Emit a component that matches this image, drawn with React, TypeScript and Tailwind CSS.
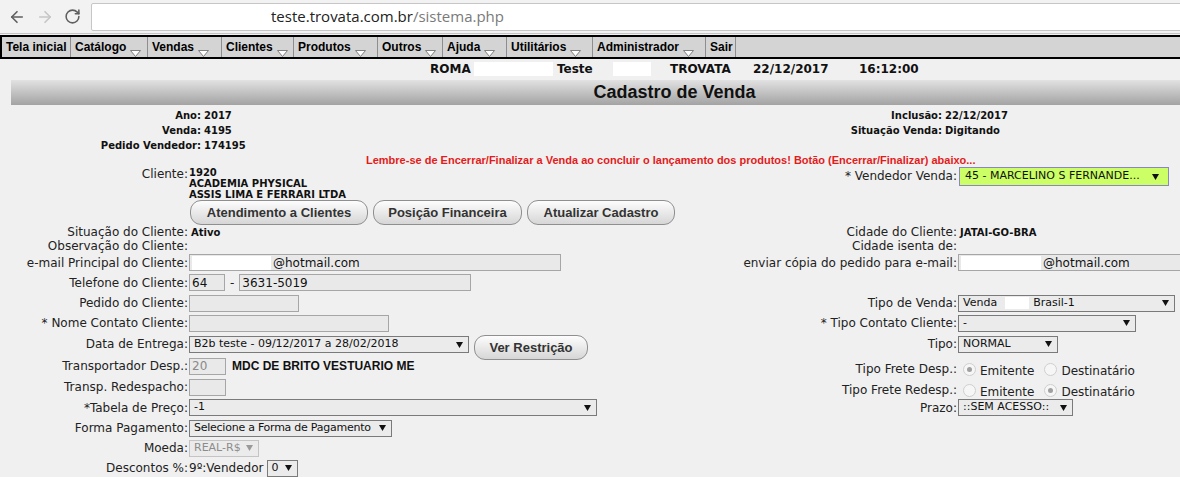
import { ArrowLeft, ArrowRight, RotateCw } from "lucide-react";
import type { ReactNode } from "react";

const menu = [
  { name: "Tela inicial", w: "w-[69px]", arrow: false },
  { name: "Catálogo", w: "w-[77px]", arrow: true },
  { name: "Vendas", w: "w-[74px]", arrow: true },
  { name: "Clientes", w: "w-[72px]", arrow: true },
  { name: "Produtos", w: "w-[84px]", arrow: true },
  { name: "Outros", w: "w-[65px]", arrow: true },
  { name: "Ajuda", w: "w-[64px]", arrow: true },
  { name: "Utilitários", w: "w-[86px]", arrow: true },
  { name: "Administrador", w: "w-[113px]", arrow: true },
  { name: "Sair", w: "w-[30px]", arrow: false },
];

function MenuArrow() {
  return (
    <svg width="11" height="7" viewBox="0 0 11 7" className="ml-[4px] self-end">
      <polygon points="0.5,0.5 10.5,0.5 5.5,6.5" fill="#fff" stroke="#7f7f7f" />
    </svg>
  );
}

function Caret({ disabled }: { disabled?: boolean }) {
  return (
    <svg width="7" height="6" viewBox="0 0 7 6" className="shrink-0">
      <polygon points="0,0 7,0 3.5,6" fill={disabled ? "#9a9a9a" : "#111"} />
    </svg>
  );
}

function Select({
  className,
  children,
  disabled,
}: {
  className: string;
  children: ReactNode;
  disabled?: boolean;
}) {
  return (
    <div
      className={`flex h-[17px] items-center border bg-[#ebebeb] pl-[4px] pr-[5px] text-[11px] ${
        disabled ? "border-[#c4c4c4] text-[#8c8c8c]" : "border-[#7a7a7a] text-[#111]"
      } ${className}`}
    >
      <span className="flex flex-1 items-center whitespace-nowrap">{children}</span>
      <Caret disabled={disabled} />
    </div>
  );
}

function Field({
  className,
  children,
  muted,
}: {
  className: string;
  children?: ReactNode;
  muted?: boolean;
}) {
  return (
    <div
      className={`flex h-[17px] items-center border border-[#a6a6a6] bg-[#e9e9e9] px-[2px] text-[12px] ${
        muted ? "text-[#8a8a8a]" : "text-[#111]"
      } ${className}`}
    >
      {children}
    </div>
  );
}

function Radio({ checked }: { checked?: boolean }) {
  return (
    <span className="flex h-[13px] w-[13px] items-center justify-center rounded-full border border-[#cfcfcf] bg-[#f6f6f6]">
      {checked && <span className="h-[5px] w-[5px] rounded-full bg-[#a0a0a0]" />}
    </span>
  );
}

function Btn({ className, children }: { className: string; children: ReactNode }) {
  return (
    <div
      className={`flex h-[25px] items-center justify-center rounded-[11px] border border-[#8f8f8f] bg-linear-to-b from-[#fdfdfd] to-[#d6d6d6] font-['Liberation_Sans',Arial,sans-serif] text-[13px] font-bold text-[#333] ${className}`}
    >
      {children}
    </div>
  );
}

// one form line: left label | left value | right label | right value
function Row({
  h,
  a,
  b,
  c,
  d,
}: {
  h: string;
  a?: ReactNode;
  b?: ReactNode;
  c?: ReactNode;
  d?: ReactNode;
}) {
  return (
    <div className={`flex ${h}`}>
      <div className="flex w-[189px] items-center justify-end pr-[1px] whitespace-nowrap">{a}</div>
      <div className="flex w-[411px] items-center whitespace-nowrap">{b}</div>
      <div className="flex w-[358px] items-center justify-end pr-[1px] whitespace-nowrap">{c}</div>
      <div className="flex w-[222px] items-center whitespace-nowrap">{d}</div>
    </div>
  );
}

function InfoLine({ a, b, c, d }: { a?: string; b?: string; c?: string; d?: string }) {
  return (
    <div className="flex h-[15px] items-center text-[10px] font-bold text-[#111]">
      <div className="w-[201px] text-right">{a}</div>
      <div className="w-[400px] pl-[3px]">{b}</div>
      <div className="w-[341px] text-right">{c}</div>
      <div className="pl-[3px]">{d}</div>
    </div>
  );
}

function Frete({ first }: { first: boolean }) {
  return (
    <div className="ml-[5px] mt-[7px] flex items-center">
      <Radio checked={first} />
      <span className="ml-[4px] mt-[3px]">Emitente</span>
      <span className="ml-[10px]">
        <Radio checked={!first} />
      </span>
      <span className="ml-[4px] mt-[3px]">Destinatário</span>
    </div>
  );
}

export default function App() {
  return (
    <div className="h-[477px] w-[1180px] overflow-hidden bg-[#f0f0f0] font-['DejaVu_Sans',sans-serif] text-[12px] text-[#222]">
      {/* browser bar */}
      <div className="flex h-[34px] items-center border-b border-[#c4c4c4] bg-[#f2f2f2]">
        <ArrowLeft size={18} strokeWidth={2.2} className="ml-[8px] text-[#5f5f5f]" />
        <ArrowRight size={18} strokeWidth={2.2} className="ml-[10px] text-[#c6c6c6]" />
        <RotateCw size={17} strokeWidth={2.2} className="ml-[10px] text-[#5f5f5f]" />
        <div className="ml-[10px] mr-[-6px] flex h-[28px] flex-1 items-center rounded-[2px] border border-[#c6c6c6] bg-white pl-[179px] font-['Open_Sans',sans-serif] text-[15px]">
          <span className="text-[#222]">teste.trovata.com.br</span>
          <span className="text-[#7a7a7a]">/sistema.php</span>
        </div>
      </div>
      <div className="h-[1px]" />

      {/* menu */}
      <div className="flex h-[24px] border-y-2 border-l-2 border-black bg-[#d4d4d4] font-['Liberation_Sans',Arial,sans-serif] text-[12px] font-bold text-black">
        {menu.map((m) => (
          <div key={m.name} className={`flex h-full border-r border-[#8e8e8e] pl-[4px] ${m.w}`}>
            <span className="self-center">{m.name}</span>
            {m.arrow && <MenuArrow />}
          </div>
        ))}
      </div>

      {/* user line */}
      <div className="flex h-[20px] items-center pl-[430px] text-[12px] font-bold text-[#111]">
        <span className="w-[44px]">ROMA</span>
        <span className="h-[14px] w-[79px] bg-white" />
        <span className="ml-[4px] w-[56px]">Teste</span>
        <span className="h-[14px] w-[38px] bg-white" />
        <span className="ml-[19px] w-[83px]">TROVATA</span>
        <span className="w-[106px]">22/12/2017</span>
        <span>16:12:00</span>
      </div>

      {/* title */}
      <div className="ml-[11px] mt-[1px] flex h-[25px] w-[1327px] items-center justify-center bg-linear-to-b from-[#e2e2e2] to-[#a3a3a3] font-['Liberation_Sans',Arial,sans-serif] text-[18px] font-bold text-[#111]">
        Cadastro de Venda
      </div>

      <div className="mt-[3px]">
        <InfoLine a="Ano:" b="2017" c="Inclusão:" d="22/12/2017" />
        <InfoLine a="Venda:" b="4195" c="Situação Venda:" d="Digitando" />
        <InfoLine a="Pedido Vendedor:" b="174195" />
      </div>

      <div className="flex h-[14px] items-center pl-[366px] font-['Liberation_Sans',Arial,sans-serif] text-[11px] font-bold whitespace-nowrap text-[#e31b1b]">
        Lembre-se de Encerrar/Finalizar a Venda ao concluir o lançamento dos produtos! Botão (Encerrar/Finalizar) abaixo...
      </div>

      {/* cliente */}
      <div className="flex h-[33px]">
        <div className="w-[189px] pr-[1px] text-right leading-[14px]">Cliente:</div>
        <div className="w-[411px] text-[10px] font-bold leading-[11px] text-[#111]">
          <div>1920</div>
          <div>ACADEMIA PHYSICAL</div>
          <div>ASSIS LIMA E FERRARI LTDA</div>
        </div>
        <div className="flex w-[358px] items-start justify-end pr-[1px] pt-[2px] leading-[14px]">
          * Vendedor Venda:
        </div>
        <div className="ml-[1px] flex h-[19px] w-[210px] items-center border border-[#8b86bd] bg-[#ccff66] pl-[5px] pr-[9px] text-[11px] text-[#111]">
          <span className="flex-1 whitespace-nowrap">45 - MARCELINO S FERNANDE...</span>
          <Caret />
        </div>
      </div>

      <div className="flex h-[25px] gap-[5px] pl-[190px]">
        <Btn className="w-[178px]">Atendimento a Clientes</Btn>
        <Btn className="w-[149px]">Posição Financeira</Btn>
        <Btn className="w-[148px]">Atualizar Cadastro</Btn>
      </div>

      {/* form */}
      <Row
        h="h-[14px]"
        a="Situação do Cliente:"
        b={<span className="pl-[2px] text-[10px] font-bold text-[#111]">Ativo</span>}
        c="Cidade do Cliente:"
        d={<span className="pl-[2px] text-[10px] font-bold text-[#111]">JATAI-GO-BRA</span>}
      />
      <Row h="h-[14px]" a="Observação do Cliente:" c="Cidade isenta de:" />
      <Row
        h="h-[19px]"
        a="e-mail Principal do Cliente:"
        b={
          <Field className="w-[372px]">
            <span className="h-[14px] w-[79px] bg-white" />
            <span className="ml-[2px]">@hotmail.com</span>
          </Field>
        }
        c="enviar cópia do pedido para e-mail:"
        d={
          <Field className="mr-[-20px] w-[250px]">
            <span className="h-[14px] w-[80px] bg-white" />
            <span className="ml-[2px]">@hotmail.com</span>
          </Field>
        }
      />
      <Row
        h="h-[21px]"
        a="Telefone do Cliente:"
        b={
          <>
            <Field className="w-[36px]">64</Field>
            <span className="mx-[5px]">-</span>
            <Field className="w-[232px]">3631-5019</Field>
          </>
        }
      />
      <Row
        h="h-[20px]"
        a="Pedido do Cliente:"
        b={<Field className="w-[110px]" />}
        c="Tipo de Venda:"
        d={
          <Select className="w-[217px]">
            Venda <span className="ml-[8px] h-[12px] w-[24px] bg-white" />
            <span className="ml-[4px]">Brasil-1</span>
          </Select>
        }
      />
      <Row
        h="h-[20px]"
        a="* Nome Contato Cliente:"
        b={<Field className="w-[200px]" />}
        c="* Tipo Contato Cliente:"
        d={<Select className="w-[178px]">-</Select>}
      />
      <div className="flex h-[22px]">
        <div className="flex w-[189px] items-center justify-end pr-[1px]">Data de Entrega:</div>
        <div className="flex w-[411px] items-start pt-[3px]">
          <Select className="w-[280px]">B2b teste - 09/12/2017 a 28/02/2018</Select>
          <Btn className="ml-[5px] mt-[-1px] w-[114px] shrink-0">Ver Restrição</Btn>
        </div>
        <div className="flex w-[358px] items-center justify-end pr-[1px]">Tipo:</div>
        <div className="flex w-[222px] items-center">
          <Select className="w-[100px]">NORMAL</Select>
        </div>
      </div>
      <Row
        h="h-[22px]"
        a="Transportador Desp.:"
        b={
          <>
            <Field className="w-[37px]" muted>
              20
            </Field>
            <span className="ml-[6px] font-['Liberation_Sans',Arial,sans-serif] text-[12px] font-bold text-[#111]">
              MDC DE BRITO VESTUARIO ME
            </span>
          </>
        }
        c={<span className="mt-[5px]">Tipo Frete Desp.:</span>}
        d={<Frete first />}
      />
      <Row
        h="h-[20px]"
        a="Transp. Redespacho:"
        b={<Field className="w-[37px]" />}
        c={<span className="mt-[5px]">Tipo Frete Redesp.:</span>}
        d={<Frete first={false} />}
      />
      <Row
        h="h-[21px]"
        a="*Tabela de Preço:"
        b={<Select className="w-[408px]">-1</Select>}
        c="Prazo:"
        d={<Select className="w-[115px]">::SEM ACESSO::</Select>}
      />
      <Row
        h="h-[20px]"
        a="Forma Pagamento:"
        b={
          <Select className="w-[203px] tracking-[-0.25px]">
            Selecione a Forma de Pagamento
          </Select>
        }
      />
      <Row h="h-[20px]" a="Moeda:" b={<Select className="w-[70px]" disabled>REAL-R$</Select>} />
      <Row
        h="h-[20px]"
        a="Descontos %:"
        b={
          <>
            <span>9º:Vendedor</span>
            <Select className="ml-[3px] w-[31px]">0</Select>
          </>
        }
      />
    </div>
  );
}
